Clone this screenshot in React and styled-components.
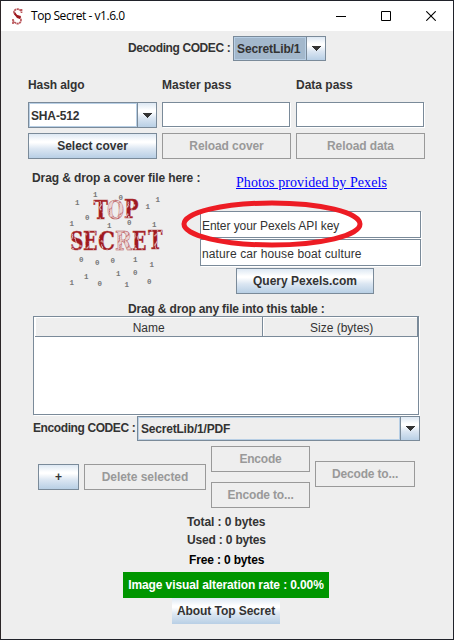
import React from "react";
import styled, { createGlobalStyle } from "styled-components";

const GlobalStyle = createGlobalStyle`
  * { box-sizing: border-box; }
  body {
    margin: 0;
    background: #ededed;
    font: 12px/14px "Liberation Sans", Arial, sans-serif;
    color: #333;
  }
`;

const Window = styled.main`
  width: 454px;
  height: 640px;
  display: flex;
  flex-direction: column;
  overflow: hidden;
  background: #eee;
  border: 1px solid #20222a;
  border-left-color: #2b2527;
`;

const TitleBar = styled.header`
  height: 30px;
  flex: none;
  display: flex;
  align-items: center;
  padding: 0 17px 0 11px;
  background: #fff;
  color: #000;
`;

const Title = styled.h1`
  margin: 0 auto 0 7px;
  font: 400 12px/16px "Open Sans", "Noto Sans", sans-serif;
  letter-spacing: -0.45px;
  white-space: nowrap;
`;

const Controls = styled.div`
  display: flex;
  gap: 35px;
  svg { display: block; }
`;

const Row = styled.div`
  display: flex;
  flex: none;
  height: ${(p) => p.$h}px;
  margin-top: ${(p) => p.$top || 0}px;
  padding-left: ${(p) => p.$left || 0}px;
  gap: ${(p) => p.$gap || 0}px;
`;

const Column = styled.div`
  display: flex;
  flex-direction: column;
  flex: none;
  width: ${(p) => p.$w}px;
  padding-top: ${(p) => p.$top || 0}px;
  gap: ${(p) => p.$gap || 0}px;
`;

const Label = styled.span`
  display: block;
  flex: none;
  width: ${(p) => (p.$w ? p.$w + "px" : "auto")};
  margin-top: ${(p) => p.$top || 0}px;
  font-weight: 700;
  letter-spacing: ${(p) => p.$ls || 0}px;
  color: ${(p) => p.$color || "#333"};
  white-space: nowrap;
`;

const Button = styled.button`
  flex: none;
  width: ${(p) => p.$w}px;
  height: 26px;
  padding: 0;
  border: 1px solid #7a8a99;
  border-radius: 0;
  background: linear-gradient(#dde8f3 0%, #fff 30%, #fff 36%, #dbe6f2 62%, #b8cfe5 100%);
  color: #333;
  font: 700 12px/14px "Liberation Sans", Arial, sans-serif;
  letter-spacing: ${(p) => p.$ls || 0}px;
  white-space: nowrap;
  &:disabled {
    background: #eee;
    border-color: #999;
    color: #999;
  }
`;

const AboutButton = styled(Button)`
  border: 0;
  margin-left: 171px;
`;

const Combo = styled.div`
  flex: none;
  display: flex;
  width: ${(p) => p.$w}px;
  height: ${(p) => p.$h || 25}px;
  border: 1px solid #7a8a99;
`;

const ComboValue = styled.div`
  flex: 1;
  border: 1px solid #b8cfe5;
  background: ${(p) => p.$bg || "#eee"};
  padding: ${(p) => p.$pad || "4px 2px"};
  font-weight: 700;
  letter-spacing: ${(p) => p.$ls || 0}px;
  white-space: nowrap;
`;

const ComboArrow = styled.div`
  width: 19px;
  border-left: 1px solid #7a8a99;
  background: linear-gradient(#dde8f3 0%, #fff 30%, #fff 36%, #dbe6f2 62%, #b8cfe5 100%);
  display: flex;
  align-items: center;
  justify-content: center;
`;

const Field = styled.div`
  flex: none;
  width: ${(p) => p.$w}px;
  height: ${(p) => p.$h}px;
  border: 1px solid #7a8a99;
  background: #fff;
  box-shadow: 1px 1px 0 #fff;
  margin-right: 1px;
  padding: ${(p) => p.$padTop || 0}px 1px 0;
  letter-spacing: ${(p) => p.$ls || 0}px;
  white-space: nowrap;
`;

const PexelsLink = styled.a`
  display: block;
  margin-left: 36px;
  font: 14px/16px "Liberation Serif", "Times New Roman", serif;
  letter-spacing: 0.08px;
  color: #00f;
  text-decoration: underline;
  white-space: nowrap;
`;

const Highlight = styled.svg`
  position: absolute;
  left: -20px;
  top: 31px;
`;

const Search = styled.section`
  position: relative;
  width: 223px;
  padding-top: 8px;
`;

const Fields = styled.div`
  display: flex;
  flex-direction: column;
  gap: 1px;
  margin-top: 20px;
`;

const Table = styled.section`
  flex: none;
  width: 386px;
  height: 99px;
  margin-left: 32px;
  border: 1px solid #7a8a99;
  background: #fff;
  box-shadow: 1px 1px 0 #fff;
`;

const TableHead = styled.div`
  display: flex;
  height: 20px;
  margin-left: 1px;
  border-bottom: 1px solid #7a8a99;
  background: #eee;
`;

const HeadCell = styled.div`
  width: ${(p) => p.$w}px;
  border-right: 1px solid #7a8a99;
  box-shadow: inset 1px 1px 0 #fff;
  padding: 4px 0 0 ${(p) => p.$indent || 0}px;
  text-align: center;
`;

const Totals = styled.div`
  height: 57px;
  margin-top: 7px;
  padding-left: 186px;
  flex: none;
`;

const Rate = styled.div`
  flex: none;
  width: 206px;
  height: 26px;
  margin-left: 122px;
  padding-top: 6px;
  background: #009600;
  color: #fff;
  font-weight: 700;
  text-align: center;
  letter-spacing: -0.11px;
  white-space: nowrap;
`;

const Arrow = () => (
  <svg width="10" height="5" shapeRendering="crispEdges">
    <path d="M0 0H10L5 5Z" fill="#333" />
  </svg>
);

function Select({ w, h, bg, pad, ls, children }) {
  return (
    <Combo $w={w} $h={h}>
      <ComboValue $bg={bg} $pad={pad} $ls={ls}>{children}</ComboValue>
      <ComboArrow><Arrow /></ComboArrow>
    </Combo>
  );
}

const digits = [
  ["1", 75, 205], ["1", 93, 197], ["0", 118.5, 199.5], ["1", 155.5, 202], ["1", 145.5, 208.5],
  ["0", 85, 219.5], ["1", 69.5, 226], ["1", 107, 228], ["0", 127, 225], ["1", 152, 226.5],
  ["0", 79, 262], ["0", 95, 265], ["0", 110.5, 263], ["1", 133, 262], ["1", 149.5, 267],
  ["1", 84, 278.5], ["1", 116, 275.5], ["0", 133, 274.5], ["1", 69.5, 285], ["0", 97.5, 286],
  ["1", 124.5, 287], ["0", 147, 284],
];

const letters = [
  ["T", 93.5, 219, 14.5, 1], ["O", 107, 219, 17, 0], ["P", 124, 218, 14.5, 1],
  ["S", 70, 250, 13.5, 1], ["E", 83, 250, 14.5, 1], ["C", 98, 250, 17, 1],
  ["R", 115, 250, 17, 0], ["E", 132, 250, 14.5, 1], ["T", 148, 249, 14.5, 1],
];

const SecretLogo = () => (
  <svg width="100" height="100" viewBox="66 190 100 100">
    <defs>
      <pattern id="worn" width="19" height="13" patternUnits="userSpaceOnUse" patternTransform="rotate(24)">
        <rect width="19" height="13" fill="#a0191e" />
        <path d="M2 0L5 3L4 6L7 8M9 2L11 6L9 10M14 0L13 5L17 9M0 10H4" stroke="#eee" strokeWidth="1" fill="none" />
        <circle cx="16" cy="3" r="1.1" fill="#eee" />
      </pattern>
      <pattern id="faint" width="11" height="9" patternUnits="userSpaceOnUse" patternTransform="rotate(30)">
        <rect width="11" height="9" fill="#e9d3d3" />
        <path d="M1 0L4 5L2 9M7 0L9 4L6 9" stroke="#b8484b" strokeWidth=".9" fill="none" />
      </pattern>
    </defs>
    <g fill="#777" fontFamily="Liberation Mono, monospace" fontWeight="700" fontSize="7.5">
      {digits.map(([d, x, y]) => <text key={`${x}-${y}`} x={x} y={y}>{d}</text>)}
    </g>
    <g fontFamily="DejaVu Serif, serif" fontWeight="700" fontSize="25.5" stroke="#b34a4d" strokeWidth=".4">
      {letters.map(([c, x, y, w, solid]) => (
        <text key={x} x={x} y={y} textLength={w} lengthAdjust="spacingAndGlyphs" fill={solid ? "url(#worn)" : "url(#faint)"}>{c}</text>
      ))}
    </g>
  </svg>
);

const AppIcon = () => (
  <svg width="12" height="17" viewBox="0 0 12 17">
    <path d="M9.5 1V5M9 3C7 0 2 1 2 4C2 8 9 8 9 12C9 16 4 17 1.5 13M1 11V16" fill="none" stroke="#b9555a" strokeWidth="1.7" strokeDasharray="2.2 .5" />
    <path d="M3 4L5 7L9 8L8 11L5 10L2 6Z" fill="#9d1a20" />
  </svg>
);

export default function App() {
  return (
    <>
      <GlobalStyle />
      <Window>
        <TitleBar>
          <AppIcon />
          <Title>Top Secret - v1.6.0</Title>
          <Controls>
            <svg width="10" height="10"><path d="M0 5.5H10" stroke="#000" /></svg>
            <svg width="10" height="10"><path d="M.5 .5H9.5V9.5H.5Z" fill="none" stroke="#000" /></svg>
            <svg width="10" height="10"><path d="M.3 .3L9.7 9.7M9.7 .3L.3 9.7" stroke="#000" strokeWidth="1.1" /></svg>
          </Controls>
        </TitleBar>

        <Row $h={25} $top={5} $left={127}>
          <Label $w={105} $top={5} $ls={-0.4}>Decoding CODEC :</Label>
          <Select w={93} bg="#a3b8cc" ls={-0.12}>SecretLib/1</Select>
        </Row>

        <Row $h={24} $top={17} $left={27}>
          <Label $w={134} $ls={-0.1}>Hash algo</Label>
          <Label $w={134}>Master pass</Label>
          <Label>Data pass</Label>
        </Row>
        <Row $h={26} $left={27} $gap={5}>
          <Select w={129} h={26} bg="#fff" pad="5px 1px" ls={-0.15}>SHA-512</Select>
          <Field $w={128} $h={25} />
          <Field $w={128} $h={25} />
        </Row>
        <Row $h={26} $top={5} $left={27} $gap={5}>
          <Button $w={129}>Select cover</Button>
          <Button $w={129} $ls={-0.08} disabled>Reload cover</Button>
          <Button $w={129} $ls={-0.1} disabled>Reload data</Button>
        </Row>

        <Row $h={135} $top={8} $left={31}>
          <Column $w={168} $top={4}>
            <Label $ls={-0.1}>Drag &amp; drop a cover file here :</Label>
            <Row $h={100} $top={5} $left={34}><SecretLogo /></Row>
          </Column>
          <Search>
            <PexelsLink>Photos provided by Pexels</PexelsLink>
            <Fields>
              <Field $w={221} $h={27} $padTop={7} $ls={-0.06}>Enter your Pexels API key</Field>
              <Field $w={221} $h={27} $padTop={7} $ls={0.12}>nature car house boat culture</Field>
            </Fields>
            <Row $h={26} $top={2} $left={36}><Button $w={138}>Query Pexels.com</Button></Row>
            <Highlight width="184" height="54">
              <ellipse cx="92" cy="26" rx="88" ry="21" fill="none" stroke="#ed1c24" strokeWidth="5" />
            </Highlight>
          </Search>
        </Row>

        <Row $h={14} $left={127}><Label $ls={-0.16}>Drag &amp; drop any file into this table :</Label></Row>
        <Table>
          <TableHead>
            <HeadCell $w={229}>Name</HeadCell>
            <HeadCell $w={155} $indent={3}>Size (bytes)</HeadCell>
          </TableHead>
        </Table>
        <Row $h={25} $top={1} $left={32}>
          <Label $w={104} $top={5} $ls={-0.4}>Encoding CODEC :</Label>
          <Select w={283} ls={-0.2}>SecretLib/1/PDF</Select>
        </Row>

        <Row $h={62} $top={5} $left={37} $gap={5}>
          <Column $w={41} $top={18}><Button $w={41}>+</Button></Column>
          <Column $w={122} $top={18}><Button $w={122} $ls={-0.06} disabled>Delete selected</Button></Column>
          <Column $w={99} $gap={10}>
            <Button $w={99} $ls={-0.2} disabled>Encode</Button>
            <Button $w={99} $ls={-0.15} disabled>Encode to...</Button>
          </Column>
          <Column $w={100} $top={15}><Button $w={100} $ls={-0.15} disabled>Decode to...</Button></Column>
        </Row>

        <Totals>
          <Label $ls={-0.1}>Total : 0 bytes</Label>
          <Label $top={4} $ls={-0.18}>Used : 0 bytes</Label>
          <Row $h={14} $top={6} $left={2}><Label $color="#000" $ls={-0.15}>Free : 0 bytes</Label></Row>
        </Totals>
        <Rate>Image visual alteration rate : 0.00%</Rate>
        <AboutButton $w={108} $ls={-0.06}>About Top Secret</AboutButton>
      </Window>
    </>
  );
}
